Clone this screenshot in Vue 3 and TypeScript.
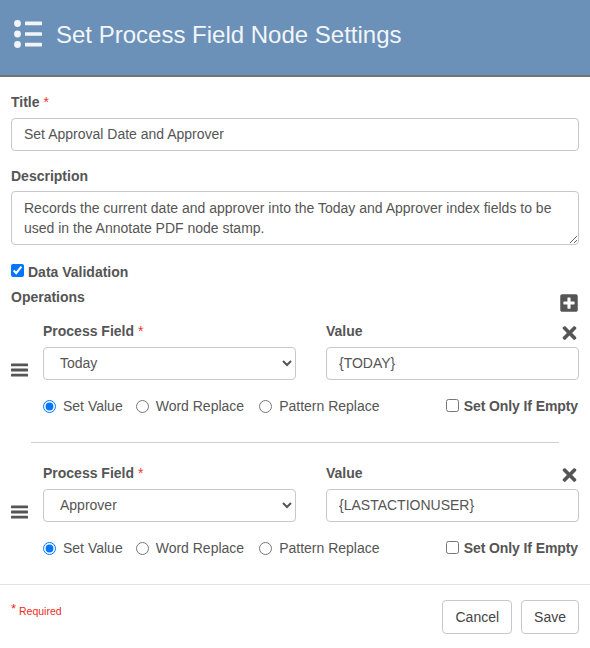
<script setup lang="ts">
interface Op { field: string; value: string; name: string }
const ops: Op[] = [
  { field: 'Today', value: '{TODAY}', name: 'm0' },
  { field: 'Approver', value: '{LASTACTIONUSER}', name: 'm1' },
]
const modes = ['Set Value', 'Word Replace', 'Pattern Replace']
</script>

<template>
  <div class="page">
    <header class="head">
      <svg class="head-icon" viewBox="0 0 28 28" width="28" height="28">
        <circle cx="3.5" cy="3.5" r="3.4" fill="#f2f5f8" />
        <circle cx="3.5" cy="14" r="3.4" fill="#f2f5f8" />
        <circle cx="3.5" cy="24.5" r="3.4" fill="#f2f5f8" />
        <rect x="11" y="1.6" width="17" height="3.6" rx=".6" fill="#f2f5f8" />
        <rect x="11" y="12.2" width="17" height="3.6" rx=".6" fill="#f2f5f8" />
        <rect x="11" y="22.8" width="17" height="3.6" rx=".6" fill="#f2f5f8" />
      </svg>
      <h1>Set Process Field Node Settings</h1>
    </header>

    <main class="body">
      <label class="lbl title-lbl">Title <span class="req">*</span></label>
      <input class="ctl" type="text" value="Set Approval Date and Approver" />

      <label class="lbl desc-lbl">Description</label>
      <textarea class="ctl area" rows="2">Records the current date and approver into the Today and Approver index fields to be used in the Annotate PDF node stamp.</textarea>

      <label class="lbl check"><input type="checkbox" checked /> Data Validation</label>

      <div class="ops-head">
        <span class="lbl">Operations</span>
        <svg class="plus" viewBox="0 0 448 512"><path d="M400 32H48C21.5 32 0 53.5 0 80v352c0 26.5 21.5 48 48 48h352c26.5 0 48-21.5 48-48V80c0-26.5-21.5-48-48-48zm-32 252c0 6.6-5.4 12-12 12h-92v92c0 6.6-5.4 12-12 12h-56c-6.6 0-12-5.4-12-12v-92H92c-6.6 0-12-5.4-12-12v-56c0-6.6 5.4-12 12-12h92v-92c0-6.6 5.4-12 12-12h56c6.6 0 12 5.4 12 12v92h92c6.6 0 12 5.4 12 12v56z" /></svg>
      </div>

      <template v-for="(op, i) in ops" :key="op.name">
        <hr v-if="i > 0" class="rule" />
        <section class="op">
          <svg class="grip" viewBox="0 0 18 14"><rect y="0" width="18" height="3" rx=".6" /><rect y="5.5" width="18" height="3" rx=".6" /><rect y="11" width="18" height="3" rx=".6" /></svg>
          <div class="op-main">
            <div class="fields">
              <div class="col">
                <div class="col-head"><span class="lbl">Process Field <span class="req">*</span></span></div>
                <select class="ctl sel"><option>{{ op.field }}</option></select>
              </div>
              <div class="col">
                <div class="col-head">
                  <span class="lbl">Value</span>
                  <svg class="close" viewBox="0 0 352 512"><path d="M242.72 256l100.07-100.07c12.28-12.28 12.28-32.19 0-44.48l-22.24-22.24c-12.28-12.28-32.19-12.28-44.48 0L176 189.28 75.93 89.21c-12.28-12.28-32.19-12.28-44.48 0L9.21 111.45c-12.28 12.28-12.28 32.19 0 44.48L109.28 256 9.21 356.07c-12.28 12.28-12.28 32.19 0 44.48l22.24 22.24c12.28 12.28 32.2 12.28 44.48 0L176 322.72l100.07 100.07c12.28 12.28 32.2 12.28 44.48 0l22.24-22.24c12.28-12.28 12.28-32.19 0-44.48L242.72 256z" /></svg>
                </div>
                <input class="ctl" type="text" :value="op.value" />
              </div>
            </div>
            <div class="modes">
              <label v-for="(m, j) in modes" :key="m" class="mode"><input type="radio" :name="op.name" :checked="j === 0" /> {{ m }}</label>
              <label class="lbl only"><input type="checkbox" /> Set Only If Empty</label>
            </div>
          </div>
        </section>
      </template>
    </main>

    <footer class="foot">
      <span class="note"><span class="note-star">*</span> Required</span>
      <div class="btns">
        <button class="btn" type="button">Cancel</button>
        <button class="btn" type="button">Save</button>
      </div>
    </footer>
  </div>
</template>

<style>
html, body { margin: 0; background: #fff; }
</style>

<style scoped>
.page { width: 590px; height: 648px; box-sizing: border-box; font-family: "Liberation Sans", Arial, sans-serif; font-size: 14px; color: #555; background: #fff; overflow: hidden; }
.head { height: 77px; box-sizing: border-box; background: #6b91b8; border-bottom: 2px solid #6f7478; display: flex; align-items: center; padding-left: 14px; gap: 14px; padding-bottom: 6px; }
.head-icon { flex: none; position: relative; top: -1px; }
.head h1 { margin: 0; font-size: 24px; font-weight: 400; color: #f2f5f8; }
.body { padding: 0 11px; }
.lbl { font-weight: 700; color: #555; font-size: 14px; line-height: 16px; display: block; }
.col-head .lbl, .ops-head .lbl { display: inline-block; }
.req { color: #e8391f; font-weight: 400; }
.title-lbl { padding-top: 17px; margin-bottom: 8px; }
.desc-lbl { margin-top: 17px; margin-bottom: 7px; }
.ctl { display: block; width: 100%; box-sizing: border-box; border: 1px solid #c8c8c8; border-radius: 4px; height: 33px; padding: 0 12px 2px; font: 14px "Liberation Sans", Arial, sans-serif; color: #555; background: #fff; outline: none; }
.area { height: 54px; padding: 6px 12px; line-height: 20px; resize: vertical; }
.check { margin-top: 19px; display: flex; align-items: center; gap: 4px; }
.check input { margin: -3px 0 0; width: 13px; height: 13px; }
.ops-head { display: flex; justify-content: space-between; align-items: flex-end; margin-top: 9px; margin-bottom: 10px; height: 24px; }
.ops-head .lbl { position: relative; top: -8px; }
.plus { width: 18px; height: 20px; fill: #555; margin-right: 1px; }
.op { display: flex; align-items: center; }
.rule { border: 0; border-top: 1px solid #d0d0d0; margin: 28px 20px 22px; }
.grip { width: 17px; height: 14px; fill: #555; flex: none; margin-right: 15px; position: relative; top: 1px; }
.op-main { flex: 1; min-width: 0; }
.fields { display: grid; grid-template-columns: 253px 253px; column-gap: 30px; }
.col-head { height: 24px; display: flex; justify-content: space-between; align-items: flex-start; }
.close { width: 15px; height: 20px; fill: #555; margin-right: 2px; }
.sel { padding-left: 12px; }
.modes { display: flex; align-items: center; margin-top: 18px; height: 16px; }
.mode { display: flex; align-items: center; gap: 7px; margin-right: 15px; }
.mode:first-child { margin-right: 13px; }
.mode input { margin: 0; width: 13px; height: 13px; }
.only { margin-left: auto; display: flex; align-items: center; gap: 5px; margin-right: 1px; letter-spacing: -0.1px; }
.only input { margin: -2px 0 0; width: 13px; height: 13px; }
.foot { margin-top: 28px; border-top: 1px solid #e2e2e2; display: flex; justify-content: space-between; padding: 15px 11px 0; }
.note { color: #f02a1a; font-size: 10.5px; line-height: 22px; }
.note-star { font-size: 13px; position: relative; top: -2px; }
.btns { display: flex; gap: 9px; }
.btn { height: 34px; padding: 0 12px; background: #fff; border: 1px solid #c8c8c8; border-radius: 4px; font: 14px "Liberation Sans", Arial, sans-serif; color: #444; }
</style>
